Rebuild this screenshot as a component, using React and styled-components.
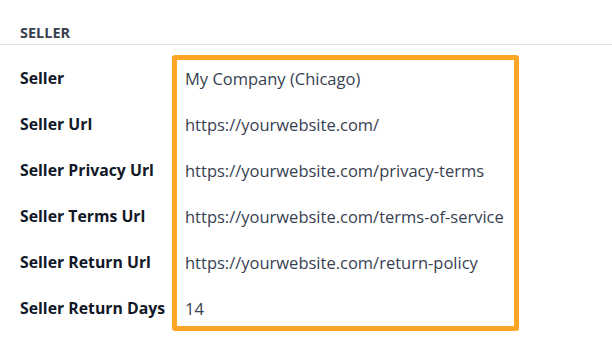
import styled, { createGlobalStyle } from "styled-components";

const rows = [
  { label: "Seller", value: "My Company (Chicago)" },
  { label: "Seller Url", value: "https://yourwebsite.com/" },
  { label: "Seller Privacy Url", value: "https://yourwebsite.com/privacy-terms" },
  { label: "Seller Terms Url", value: "https://yourwebsite.com/terms-of-service" },
  { label: "Seller Return Url", value: "https://yourwebsite.com/return-policy" },
  { label: "Seller Return Days", value: "14" },
];

const App = () => {
  return (
    <>
      <GlobalStyle />
      <Page>
        <SectionTitle>Seller</SectionTitle>
        <Fields>
          <Labels>
            {rows.map((row) => (
              <Label key={row.label}>{row.label}</Label>
            ))}
          </Labels>
          <Values>
            {rows.map((row) => (
              <Value key={row.label}>{row.value}</Value>
            ))}
          </Values>
        </Fields>
      </Page>
    </>
  );
};

export default App;

const GlobalStyle = createGlobalStyle`
  body {
    margin: 0;
    background: #ffffff;
    font-family: "Open Sans", "Noto Sans", sans-serif;
  }
`;

const Page = styled.div`
  width: 612px;
  height: 340px;
  overflow: hidden;
`;

const SectionTitle = styled.div`
  height: 45px;
  box-sizing: border-box;
  padding: 25px 0 0 20px;
  border-bottom: 1px solid #e4e4e4;
  font-size: 14.5px;
  font-weight: 700;
  text-transform: uppercase;
  color: #374151;
  line-height: 16px;
`;

const Fields = styled.div`
  display: grid;
  grid-template-columns: 172px 347px;
  margin-top: 10px;
`;

const Labels = styled.div`
  display: flex;
  flex-direction: column;
  padding-left: 20px;
`;

const Label = styled.div`
  height: 46px;
  display: flex;
  align-items: center;
  font-size: 15.8px;
  font-weight: 700;
  color: #111827;
  white-space: nowrap;
`;

const Values = styled.div`
  position: relative;
  display: flex;
  flex-direction: column;
  padding-left: 13px;

  &::after {
    content: "";
    position: absolute;
    inset: 0;
    border: 5.5px solid #ffa526;
    border-radius: 3px;
    pointer-events: none;
  }
`;

const Value = styled.div`
  height: 46px;
  display: flex;
  align-items: center;
  font-size: 16.5px;
  color: #374151;
  white-space: nowrap;
`;
